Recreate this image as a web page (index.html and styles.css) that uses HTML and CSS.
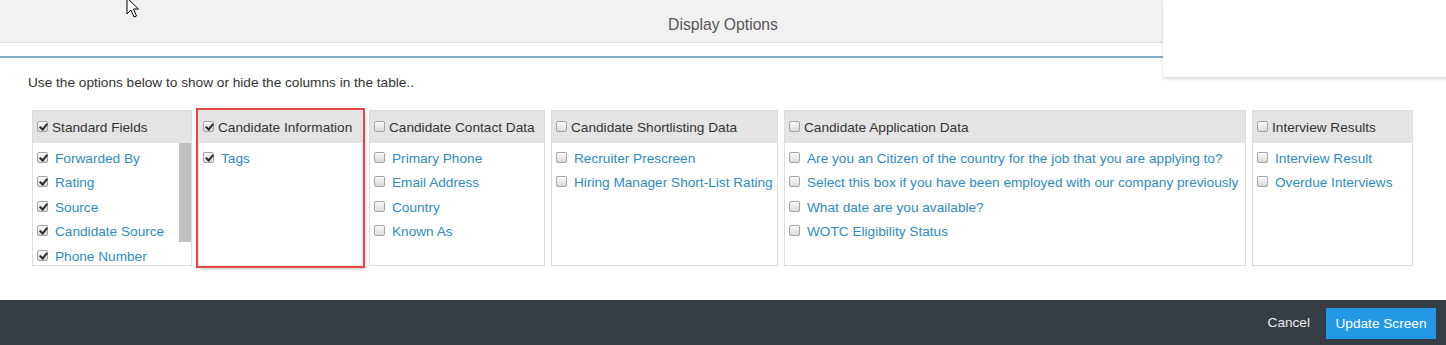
FILE: index.html
```html
<!DOCTYPE html>
<html lang="en">
<head>
<meta charset="utf-8">
<title>Display Options</title>
<link rel="stylesheet" href="styles.css">
</head>
<body>
<div class="page">
  <div class="modal">
    <div class="modal-head">Display Options</div>
    <div class="rule"></div>
    <p class="intro">Use the options below to show or hide the columns in the table..</p>
    <div class="cols">
      <div class="col col-std">
        <label class="col-head"><input type="checkbox" checked>Standard Fields</label>
        <div class="col-scroll">
          <ul class="col-body">
            <li><input type="checkbox" checked><a>Forwarded By</a></li>
            <li><input type="checkbox" checked><a>Rating</a></li>
            <li><input type="checkbox" checked><a>Source</a></li>
            <li><input type="checkbox" checked><a>Candidate Source</a></li>
            <li><input type="checkbox" checked><a>Phone Number</a></li>
          </ul>
          <div class="scroll-thumb"></div>
        </div>
      </div>
      <div class="col col-info highlighted">
        <label class="col-head"><input type="checkbox" checked>Candidate Information</label>
        <ul class="col-body">
          <li><input type="checkbox" checked><a>Tags</a></li>
        </ul>
      </div>
      <div class="col col-contact">
        <label class="col-head"><input type="checkbox">Candidate Contact Data</label>
        <ul class="col-body">
          <li><input type="checkbox"><a>Primary Phone</a></li>
          <li><input type="checkbox"><a>Email Address</a></li>
          <li><input type="checkbox"><a>Country</a></li>
          <li><input type="checkbox"><a>Known As</a></li>
        </ul>
      </div>
      <div class="col col-short">
        <label class="col-head"><input type="checkbox">Candidate Shortlisting Data</label>
        <ul class="col-body">
          <li><input type="checkbox"><a>Recruiter Prescreen</a></li>
          <li><input type="checkbox"><a>Hiring Manager Short-List Rating</a></li>
        </ul>
      </div>
      <div class="col col-app">
        <label class="col-head"><input type="checkbox">Candidate Application Data</label>
        <ul class="col-body">
          <li><input type="checkbox"><a>Are you an Citizen of the country for the job that you are applying to?</a></li>
          <li><input type="checkbox"><a>Select this box if you have been employed with our company previously</a></li>
          <li><input type="checkbox"><a>What date are you available?</a></li>
          <li><input type="checkbox"><a>WOTC Eligibility Status</a></li>
        </ul>
      </div>
      <div class="col col-int">
        <label class="col-head"><input type="checkbox">Interview Results</label>
        <ul class="col-body">
          <li><input type="checkbox"><a>Interview Result</a></li>
          <li><input type="checkbox"><a>Overdue Interviews</a></li>
        </ul>
      </div>
    </div>
  </div>
  <footer class="footer">
    <button class="btn-link" type="button">Cancel</button>
    <button class="btn-primary" type="button">Update Screen</button>
  </footer>
  <div class="side-panel"></div>
  <svg class="cursor" width="14" height="22" viewBox="0 0 14 22">
    <path d="M1 1 L1 17 L5 13 L8 20 L10.5 19 L7.5 12 L12.5 12 Z" fill="#fff" stroke="#000" stroke-width="1" stroke-linejoin="miter"/>
  </svg>
</div>
</body>
</html>
```

FILE: styles.css
```css
* { box-sizing: border-box; }

html, body {
  margin: 0;
  padding: 0;
  background: #fff;
}

body {
  font-family: "Liberation Sans", Arial, sans-serif;
  font-size: 13.65px;
  color: #333;
}

.page {
  position: relative;
  height: 345px;
  display: flex;
  flex-direction: column;
  overflow: hidden;
}

.modal {
  flex: 1;
}

.modal-head {
  width: 1163px;
  height: 43px;
  background: #f1f1f1;
  border-bottom: 1px solid #dedede;
  display: flex;
  align-items: center;
  justify-content: center;
  padding-top: 8px;
  padding-left: 283px;
  font-size: 15.7px;
  color: #555;
}

.rule {
  width: 1163px;
  height: 2px;
  margin-top: 13px;
  background: #86aecb;
}

.intro {
  margin: 17px 0 0 28px;
  line-height: 15px;
  color: #333;
}

.cols {
  display: flex;
  gap: 6px;
  margin: 20px 0 0 32px;
  align-items: flex-start;
}

.col {
  height: 156px;
  border: 1px solid #dcdcdc;
  display: flex;
  flex-direction: column;
  background: #fff;
}

.col-std { width: 160px; }
.col-info { width: 165px; }
.col-contact { width: 176px; }
.col-short { width: 227px; }
.col-app { width: 462px; }
.col-int { width: 161px; }

.highlighted {
  border-color: #e6e6e6;
  outline: 2px solid #e8474a;
  outline-offset: 0;
  box-shadow: 2px 3px 4px rgba(0, 0, 0, 0.25);
}

.col-head {
  height: 32px;
  flex: none;
  background: #e4e4e4;
  display: flex;
  align-items: center;
  padding: 1px 0 0 4px;
  white-space: nowrap;
  color: #333;
}

.col-head input {
  margin: 0 4px 3px 0;
}

.col-scroll {
  position: relative;
  flex: 1;
  min-height: 0;
  overflow: hidden;
}

.scroll-thumb {
  position: absolute;
  top: 0;
  right: 0;
  width: 12px;
  height: 99px;
  background: #c1c1c1;
}

.col-body {
  list-style: none;
  margin: 0;
  padding: 3px 0 0 4px;
  flex: 1;
  min-height: 0;
}

.col-body li {
  height: 24.5px;
  display: flex;
  align-items: center;
  white-space: nowrap;
}

.col-body li input {
  margin: 0 7px 2px 0;
}

.col-body a {
  color: #2e8cc3;
  text-decoration: none;
}

input[type="checkbox"] {
  appearance: none;
  -webkit-appearance: none;
  flex: none;
  position: relative;
  width: 11px;
  height: 11px;
  border: 1px solid #a4a4a4;
  border-radius: 2px;
  background: linear-gradient(#fbfbfb, #dadada);
}

input[type="checkbox"]:checked::after {
  content: "";
  position: absolute;
  left: 3px;
  top: 0px;
  width: 3px;
  height: 6px;
  border-right: 2px solid #2b2b2b;
  border-bottom: 2px solid #2b2b2b;
  transform: rotate(40deg);
}

.footer {
  height: 45px;
  flex: none;
  background: #373d45;
  display: flex;
  align-items: center;
  justify-content: flex-end;
  padding: 0 10px 0 0;
}

.btn-link {
  background: none;
  border: none;
  padding: 0;
  margin-right: 16px;
  font: inherit;
  color: #ececec;
}

.btn-primary {
  width: 110px;
  height: 31px;
  border: none;
  background: #2399e5;
  color: #fff;
  font: inherit;
  padding: 0;
  margin-top: 2px;
}

.side-panel {
  position: absolute;
  left: 1163px;
  top: 0;
  width: 290px;
  height: 77px;
  background: #fff;
  box-shadow: 0 2px 3px rgba(0, 0, 0, 0.14);
}

.cursor {
  position: absolute;
  left: 126px;
  top: -3px;
}
```
